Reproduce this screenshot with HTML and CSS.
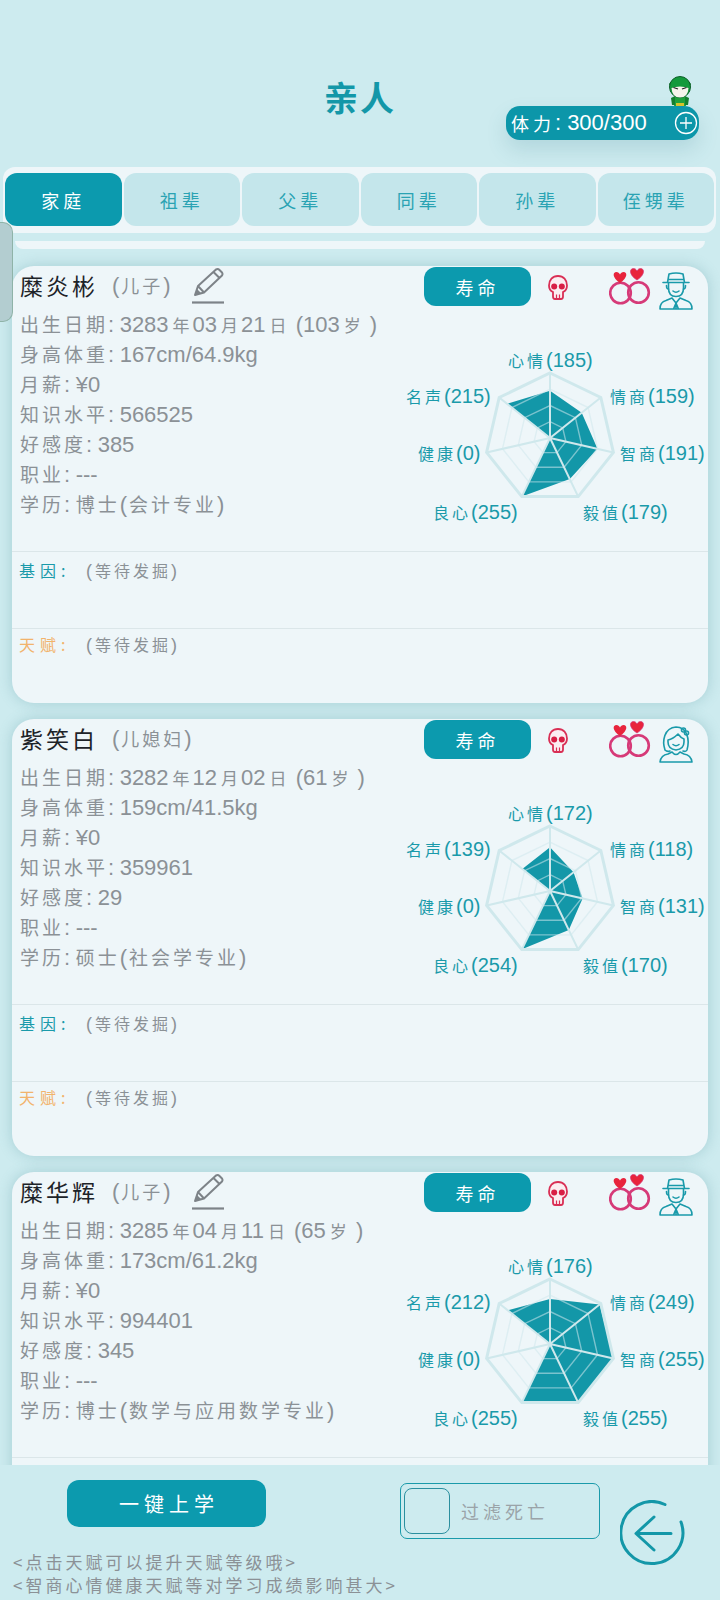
FILE: index.html
```html
<!DOCTYPE html>
<html lang="zh-CN">
<head>
    <meta charset="UTF-8">
    <meta name="viewport" content="width=device-width, initial-scale=1.0">
    <title>亲人</title>
    <link rel="stylesheet" href="styles.css">
</head>
<body>
    <!-- shared icons -->
    <svg class="defs" width="0" height="0">
        <defs>
            <symbol id="pencil" viewBox="0 0 32 36">
                <path d="M3 27 L6 18 L24 1.5 Q26 0.5 27.5 2 L30 4.5 Q31 6 30 7.5 L12 24.5 Z M6 18 L12 24.5 M21.5 4 L27.5 10" fill="none" stroke="#7d8388" stroke-width="2" stroke-linejoin="round"/>
                <path d="M3 27 L5 21 L9 25 Z" fill="#7d8388"/>
                <path d="M0 34.5 H32" stroke="#7d8388" stroke-width="2.2"/>
            </symbol>
            <symbol id="skull" viewBox="0 0 20 25">
                <path d="M10 1 C4.5 1 1 5 1 10.5 C1 14 2.5 16 5 17 V21.5 Q5 24 7 24 H13 Q15 24 15 21.5 V17 C17.5 16 19 14 19 10.5 C19 5 15.5 1 10 1 Z" fill="#fbeef1" stroke="#d92f55" stroke-width="1.8"/>
                <circle cx="6.2" cy="11.5" r="3" fill="#d81f45"/>
                <circle cx="13.8" cy="11.5" r="3" fill="#d81f45"/>
                <path d="M8.5 19.5 V24 M11.5 19.5 V24" stroke="#d92f55" stroke-width="1.2"/>
            </symbol>
            <symbol id="rings" viewBox="0 0 42 37">
                <circle cx="11.5" cy="25" r="10.3" fill="none" stroke="#d63a78" stroke-width="2.6"/>
                <circle cx="29.5" cy="24.5" r="10.3" fill="none" stroke="#d63a78" stroke-width="2.6"/>
                <path d="M11 15 C3 9.5 3.5 4 7.5 4 C9 4 10.3 5 11 6.5 C11.7 5 13 4 14.5 4 C18.5 4 19 9.5 11 15 Z" fill="#e8243c"/>
                <path d="M28 12 C19.5 6.5 20.5 0.5 24.5 0.5 C26 0.5 27.3 1.5 28 3 C28.7 1.5 30 0.5 31.5 0.5 C35.5 0.5 36.5 6.5 28 12 Z" fill="#e8243c" stroke="#d63a78" stroke-width="0.8"/>
            </symbol>
            <symbol id="man" viewBox="0 0 34 38">
                <g fill="none" stroke="#1a9aaa" stroke-width="1.6" stroke-linejoin="round" stroke-linecap="round">
                    <path d="M4 10.5 H30 M8.5 10.5 L10 2 Q17 0 24 2 L25.5 10.5 M9 7.5 H25"/>
                    <path d="M9.5 11 V16 Q9.5 24.5 17 24.5 Q24.5 24.5 24.5 16 V11"/>
                    <path d="M7.5 13.5 Q7.5 17 9.5 17 M26.5 13.5 Q26.5 17 24.5 17"/>
                    <path d="M14 19 Q17 21.5 20 19"/>
                    <path d="M1 37 Q1 30 7 28.5 L13 26 L17 31 L21 26 L27 28.5 Q33 30 33 37 Z M17 31 V37 M14.5 37 L17 31 L19.5 37"/>
                </g>
            </symbol>
            <symbol id="woman" viewBox="0 0 34 38">
                <g fill="none" stroke="#1a9aaa" stroke-width="1.6" stroke-linejoin="round" stroke-linecap="round">
                    <path d="M6 25 C3 16 5 3 17 2 C28 2 31 14 28 25 Q27 27 24 26 M6 25 Q8 27 11 26"/>
                    <path d="M9 15 Q14 14 19 9 Q22 13 25 14 V17 Q25 24 17 25 Q9 24 9 17 Z"/>
                    <path d="M14 19.5 Q17 22 20 19.5"/>
                    <circle cx="24.5" cy="5" r="2"/>
                    <circle cx="27.5" cy="8" r="2"/>
                    <path d="M1 37 Q2 30 9 29 L13 27 Q17 32 21 27 L25 29 Q32 30 33 37 Z"/>
                </g>
            </symbol>
        </defs>
    </svg>

    <header class="top">
        <h1 class="title">亲人</h1>
        <div class="stamina-wrap">
            <svg class="hero" viewBox="0 0 26 30" width="26" height="30">
                <path d="M8 20 H18 L19 30 H7 Z" fill="#1fa23c"/>
                <rect x="9" y="27" width="8" height="3" fill="#d9c52a"/>
                <path d="M4 22 L8 20 V29 H5 Z M22 22 L18 20 V29 H21 Z" fill="#14802e"/>
                <path d="M2 8 L4.5 5 V14 Z M24 8 L21.5 5 V14 Z" fill="#14702a"/>
                <ellipse cx="13" cy="11" rx="10.5" ry="10.5" fill="#149a3c" stroke="#0b5f27" stroke-width="1"/>
                <path d="M4.5 12 Q13 9 21.5 12 Q21 21.5 13 21.5 Q5 21.5 4.5 12 Z" fill="#f6f4ec"/>
                <path d="M6.5 11.5 L11 13 M19.5 11.5 L15 13" stroke="#222" stroke-width="1.3"/>
            </svg>
            <div class="stamina">
                <span class="zh">体力</span><span class="colon">:</span>300/300
                <svg class="plus" viewBox="0 0 24 24" width="24" height="24">
                    <circle cx="12" cy="12" r="10.5" fill="none" stroke="#fff" stroke-width="1.3"/>
                    <path d="M12 6 V18 M6 12 H18" stroke="#fff" stroke-width="1.3"/>
                </svg>
            </div>
        </div>
    </header>

    <nav class="tabs">
        <div class="tab active">家庭</div>
        <div class="tab">祖辈</div>
        <div class="tab">父辈</div>
        <div class="tab">同辈</div>
        <div class="tab">孙辈</div>
        <div class="tab">侄甥辈</div>
    </nav>

    <div class="handle"></div>

    <main class="list">
        <div class="card-prev"></div>

        <section class="card">
            <div class="head">
                <span class="name">糜炎彬</span>
                <span class="relation">(<span class="zh">儿子</span>)</span>
                <svg class="pencil"><use href="#pencil"/></svg>
                <div class="actions">
                    <button class="life">寿命</button>
                    <svg class="skull"><use href="#skull"/></svg>
                    <svg class="rings"><use href="#rings"/></svg>
                    <svg class="person"><use href="#man"/></svg>
                </div>
            </div>
            <div class="body">
                <div class="info">
                    <div class="row"><span class="zh">出生日期</span><span class="colon">:</span>3283<span class="unit">年</span>03<span class="unit">月</span>21<span class="unit">日</span> (103<span class="unit">岁</span> )</div>
                    <div class="row"><span class="zh">身高体重</span><span class="colon">:</span>167cm/64.9kg</div>
                    <div class="row"><span class="zh">月薪</span><span class="colon">:</span>¥0</div>
                    <div class="row"><span class="zh">知识水平</span><span class="colon">:</span>566525</div>
                    <div class="row"><span class="zh">好感度</span><span class="colon">:</span>385</div>
                    <div class="row"><span class="zh">职业</span><span class="colon">:</span>---</div>
                    <div class="row"><span class="zh">学历</span><span class="colon">:</span><span class="zh">博士</span>(<span class="zh major">会计专业</span>)</div>
                </div>
                <div class="radar">
                    <svg class="radar-svg" viewBox="-75 -75 150 150">
                        <polygon class="data" points="0,-47.2 31.7,-25.3 47.5,10.8 19.8,41.1 -28.2,58.6 0,0 -42.8,-34.2"/>
                        <polygon class="ring" points="0,-48.8 38.1,-30.4 47.5,10.8 21.2,43.9 -21.2,43.9 -47.5,10.8 -38.1,-30.4"/>
                        <polygon class="ring" points="0,-32.5 25.4,-20.3 31.7,7.2 14.1,29.3 -14.1,29.3 -31.7,7.2 -25.4,-20.3"/>
                        <polygon class="ring" points="0,-16.3 12.7,-10.1 15.9,3.6 7,14.6 -7,14.6 -15.9,3.6 -12.7,-10.1"/>
                        <path class="spokes" d="M0 0 L0 -65 M0 0 L50.8 -40.5 M0 0 L63.4 14.5 M0 0 L28.2 58.6 M0 0 L-28.2 58.6 M0 0 L-63.4 14.5 M0 0 L-50.8 -40.5"/>
                        <polygon class="outer" points="0,-65 50.8,-40.5 63.4,14.5 28.2,58.6 -28.2,58.6 -63.4,14.5 -50.8,-40.5"/>
                    </svg>
                    <span class="stat s-mood"><span class="zh">心情</span>(185)</span>
                    <span class="stat s-eq"><span class="zh">情商</span>(159)</span>
                    <span class="stat s-iq"><span class="zh">智商</span>(191)</span>
                    <span class="stat s-will"><span class="zh">毅值</span>(179)</span>
                    <span class="stat s-good"><span class="zh">良心</span>(255)</span>
                    <span class="stat s-health"><span class="zh">健康</span>(0)</span>
                    <span class="stat s-fame"><span class="zh">名声</span>(215)</span>
                </div>
            </div>
            <div class="trait gene"><span class="trait-label">基因<span class="colon">:</span></span><span class="pending">(<span class="zh">等待发掘</span>)</span></div>
            <div class="trait talent"><span class="trait-label">天赋<span class="colon">:</span></span><span class="pending">(<span class="zh">等待发掘</span>)</span></div>
        </section>

        <section class="card">
            <div class="head">
                <span class="name">紫笑白</span>
                <span class="relation">(<span class="zh">儿媳妇</span>)</span>
                <div class="actions">
                    <button class="life">寿命</button>
                    <svg class="skull"><use href="#skull"/></svg>
                    <svg class="rings"><use href="#rings"/></svg>
                    <svg class="person"><use href="#woman"/></svg>
                </div>
            </div>
            <div class="body">
                <div class="info">
                    <div class="row"><span class="zh">出生日期</span><span class="colon">:</span>3282<span class="unit">年</span>12<span class="unit">月</span>02<span class="unit">日</span> (61<span class="unit">岁</span> )</div>
                    <div class="row"><span class="zh">身高体重</span><span class="colon">:</span>159cm/41.5kg</div>
                    <div class="row"><span class="zh">月薪</span><span class="colon">:</span>¥0</div>
                    <div class="row"><span class="zh">知识水平</span><span class="colon">:</span>359961</div>
                    <div class="row"><span class="zh">好感度</span><span class="colon">:</span>29</div>
                    <div class="row"><span class="zh">职业</span><span class="colon">:</span>---</div>
                    <div class="row"><span class="zh">学历</span><span class="colon">:</span><span class="zh">硕士</span>(<span class="zh major">社会学专业</span>)</div>
                </div>
                <div class="radar">
                    <svg class="radar-svg" viewBox="-75 -75 150 150">
                        <polygon class="data" points="0,-43.8 23.5,-18.8 32.6,7.4 18.8,39 -28.1,58.3 0,0 -27.7,-22.1"/>
                        <polygon class="ring" points="0,-48.8 38.1,-30.4 47.5,10.8 21.2,43.9 -21.2,43.9 -47.5,10.8 -38.1,-30.4"/>
                        <polygon class="ring" points="0,-32.5 25.4,-20.3 31.7,7.2 14.1,29.3 -14.1,29.3 -31.7,7.2 -25.4,-20.3"/>
                        <polygon class="ring" points="0,-16.3 12.7,-10.1 15.9,3.6 7,14.6 -7,14.6 -15.9,3.6 -12.7,-10.1"/>
                        <path class="spokes" d="M0 0 L0 -65 M0 0 L50.8 -40.5 M0 0 L63.4 14.5 M0 0 L28.2 58.6 M0 0 L-28.2 58.6 M0 0 L-63.4 14.5 M0 0 L-50.8 -40.5"/>
                        <polygon class="outer" points="0,-65 50.8,-40.5 63.4,14.5 28.2,58.6 -28.2,58.6 -63.4,14.5 -50.8,-40.5"/>
                    </svg>
                    <span class="stat s-mood"><span class="zh">心情</span>(172)</span>
                    <span class="stat s-eq"><span class="zh">情商</span>(118)</span>
                    <span class="stat s-iq"><span class="zh">智商</span>(131)</span>
                    <span class="stat s-will"><span class="zh">毅值</span>(170)</span>
                    <span class="stat s-good"><span class="zh">良心</span>(254)</span>
                    <span class="stat s-health"><span class="zh">健康</span>(0)</span>
                    <span class="stat s-fame"><span class="zh">名声</span>(139)</span>
                </div>
            </div>
            <div class="trait gene"><span class="trait-label">基因<span class="colon">:</span></span><span class="pending">(<span class="zh">等待发掘</span>)</span></div>
            <div class="trait talent"><span class="trait-label">天赋<span class="colon">:</span></span><span class="pending">(<span class="zh">等待发掘</span>)</span></div>
        </section>

        <section class="card">
            <div class="head">
                <span class="name">糜华辉</span>
                <span class="relation">(<span class="zh">儿子</span>)</span>
                <svg class="pencil"><use href="#pencil"/></svg>
                <div class="actions">
                    <button class="life">寿命</button>
                    <svg class="skull"><use href="#skull"/></svg>
                    <svg class="rings"><use href="#rings"/></svg>
                    <svg class="person"><use href="#man"/></svg>
                </div>
            </div>
            <div class="body">
                <div class="info">
                    <div class="row"><span class="zh">出生日期</span><span class="colon">:</span>3285<span class="unit">年</span>04<span class="unit">月</span>11<span class="unit">日</span> (65<span class="unit">岁</span> )</div>
                    <div class="row"><span class="zh">身高体重</span><span class="colon">:</span>173cm/61.2kg</div>
                    <div class="row"><span class="zh">月薪</span><span class="colon">:</span>¥0</div>
                    <div class="row"><span class="zh">知识水平</span><span class="colon">:</span>994401</div>
                    <div class="row"><span class="zh">好感度</span><span class="colon">:</span>345</div>
                    <div class="row"><span class="zh">职业</span><span class="colon">:</span>---</div>
                    <div class="row"><span class="zh">学历</span><span class="colon">:</span><span class="zh">博士</span>(<span class="zh major">数学与应用数学专业</span>)</div>
                </div>
                <div class="radar">
                    <svg class="radar-svg" viewBox="-75 -75 150 150">
                        <polygon class="data" points="0,-44.9 49.6,-39.6 63.4,14.5 28.2,58.6 -28.2,58.6 0,0 -42.2,-33.7"/>
                        <polygon class="ring" points="0,-48.8 38.1,-30.4 47.5,10.8 21.2,43.9 -21.2,43.9 -47.5,10.8 -38.1,-30.4"/>
                        <polygon class="ring" points="0,-32.5 25.4,-20.3 31.7,7.2 14.1,29.3 -14.1,29.3 -31.7,7.2 -25.4,-20.3"/>
                        <polygon class="ring" points="0,-16.3 12.7,-10.1 15.9,3.6 7,14.6 -7,14.6 -15.9,3.6 -12.7,-10.1"/>
                        <path class="spokes" d="M0 0 L0 -65 M0 0 L50.8 -40.5 M0 0 L63.4 14.5 M0 0 L28.2 58.6 M0 0 L-28.2 58.6 M0 0 L-63.4 14.5 M0 0 L-50.8 -40.5"/>
                        <polygon class="outer" points="0,-65 50.8,-40.5 63.4,14.5 28.2,58.6 -28.2,58.6 -63.4,14.5 -50.8,-40.5"/>
                    </svg>
                    <span class="stat s-mood"><span class="zh">心情</span>(176)</span>
                    <span class="stat s-eq"><span class="zh">情商</span>(249)</span>
                    <span class="stat s-iq"><span class="zh">智商</span>(255)</span>
                    <span class="stat s-will"><span class="zh">毅值</span>(255)</span>
                    <span class="stat s-good"><span class="zh">良心</span>(255)</span>
                    <span class="stat s-health"><span class="zh">健康</span>(0)</span>
                    <span class="stat s-fame"><span class="zh">名声</span>(212)</span>
                </div>
            </div>
            <div class="trait gene"></div>
        </section>
    </main>

    <footer class="bottom">
        <div class="bottom-left">
            <button class="study">一键上学</button>
            <p class="hint">&lt;点击天赋可以提升天赋等级哦&gt;</p>
            <p class="hint">&lt;智商心情健康天赋等对学习成绩影响甚大&gt;</p>
        </div>
        <label class="filter">
            <span class="check"></span>
            <span class="filter-text">过滤死亡</span>
        </label>
        <svg class="back" viewBox="0 0 66 66" width="66" height="66">
            <path d="M45 4.5 A31 31 0 1 0 61 22" fill="none" stroke="#1397a8" stroke-width="3" stroke-linecap="round"/>
            <path d="M51 33.5 H17 M34 17 L16 33.5 L34 50" fill="none" stroke="#1397a8" stroke-width="3" stroke-linecap="round" stroke-linejoin="round"/>
        </svg>
    </footer>
</body>
</html>
```

FILE: styles.css
```css
* {
    box-sizing: border-box;
}
body {
    margin: 0;
    width: 720px;
    height: 1600px;
    overflow: hidden;
    position: relative;
    background: #cdebef;
    font-family: "Liberation Sans", "Noto Sans CJK SC", sans-serif;
    color: #8b9196;
}
.defs {
    position: absolute;
}
.zh {
    font-family: "Noto Sans CJK SC", sans-serif;
    font-size: 19px;
    letter-spacing: 3px;
    font-weight: 400;
}
.colon {
    margin-right: 5.5px;
}

/* header */
.top {
    height: 167px;
    display: grid;
    grid-template-columns: 1fr auto 1fr;
}
.title {
    grid-column: 2;
    margin: 74px 0 0;
    font-family: "Noto Sans CJK SC", sans-serif;
    font-size: 34px;
    line-height: 46px;
    letter-spacing: 2px;
    font-weight: 700;
    color: #1397a8;
    height: 46px;
}
.stamina-wrap {
    grid-column: 3;
    justify-self: end;
    margin: 76px 21px 0 0;
    width: 193px;
    display: flex;
    flex-direction: column;
}
.hero {
    align-self: flex-end;
    margin: 0 6px 0 0;
}
.stamina {
    height: 34px;
    padding-left: 5px;
    display: flex;
    align-items: center;
    background: #0c96a9;
    border-radius: 14px 15px 15px 14px;
    color: #fff;
    font-size: 22px;
    box-shadow: 0 10px 20px rgba(60, 130, 145, 0.18);
}
.stamina .zh {
    letter-spacing: 4px;
    font-size: 18px;
}
.stamina .colon {
    margin-right: 6px;
}
.plus {
    margin-left: auto;
    margin-right: 1px;
}

/* tabs */
.tabs {
    margin: 0 4px 0 3px;
    height: 66px;
    padding: 6px 2px 7px;
    display: flex;
    gap: 2px;
    background: #eef6f9;
    border-radius: 12px;
}
.tab {
    flex: 1;
    display: flex;
    align-items: center;
    justify-content: center;
    background: #c4e6eb;
    border-radius: 12px;
    color: #2aa3b3;
    font-family: "Noto Sans CJK SC", sans-serif;
    font-size: 18px;
    letter-spacing: 4px;
}
.tab.active {
    background: #0c9aae;
    color: #fff;
}

.handle {
    position: absolute;
    left: 0;
    top: 222px;
    width: 13px;
    height: 100px;
    background: #b3cdd0;
    border: 1px solid #8fb3a8;
    border-left: none;
    border-radius: 0 10px 10px 0;
    z-index: 2;
}

/* list */
.list {
    height: 1232px;
    padding: 8px 12px 0;
    overflow: hidden;
}
.card-prev {
    margin: 0 3px 17px;
    height: 8px;
    background: #eef6f9;
    border-radius: 0 0 12px 12px;
}
.card {
    height: 437px;
    margin-bottom: 16px;
    background: #eef6f9;
    border-radius: 22px;
    box-shadow: 0 0 14px rgba(80, 145, 155, 0.32);
}
.head {
    height: 44px;
    padding: 1px 15px 0 8px;
    display: flex;
    align-items: flex-start;
}
.name {
    font-family: "Noto Sans CJK SC", sans-serif;
    font-size: 23px;
    line-height: 36px;
    letter-spacing: 3px;
    color: #1d2328;
    margin-right: 14px;
}
.relation {
    font-size: 22px;
    line-height: 36px;
    color: #8b9196;
}
.relation .zh {
    margin: 0 0 0 2px;
    font-size: 18px;
}
.pencil {
    width: 32px;
    height: 36px;
    margin: 1px 0 0 21px;
}
.actions {
    margin-left: auto;
    display: flex;
    align-items: flex-start;
    height: 43px;
}
.life {
    width: 107px;
    height: 39px;
    padding: 0;
    border: none;
    background: #0c9aae;
    border-radius: 12px;
    color: #fff;
    font-family: "Noto Sans CJK SC", sans-serif;
    font-size: 18px;
    letter-spacing: 4px;
}
.skull {
    width: 20px;
    height: 25px;
    margin: 8px 0 0 17px;
}
.rings {
    width: 42px;
    height: 37px;
    margin: 1px 0 0 41px;
}
.person {
    width: 34px;
    height: 38px;
    margin: 5px 0 0 8px;
}
.body {
    height: 241px;
    display: flex;
    justify-content: space-between;
}
.info {
    padding-left: 8px;
    margin-top: -1px;
}
.row {
    height: 30px;
    line-height: 30px;
    font-size: 22px;
    white-space: nowrap;
}
.unit {
    font-family: "Noto Sans CJK SC", sans-serif;
    font-size: 17px;
    margin: 0 3px 0 4px;
}
.row .major {
    margin-left: 2px;
}

/* radar chart, labels sit round the canvas */
.radar {
    position: relative;
    width: 310px;
    height: 241px;
    flex: none;
}
.radar-svg {
    position: absolute;
    left: 77px;
    top: 53px;
    width: 150px;
    height: 150px;
}
.data {
    fill: #1397a8;
}
.ring {
    fill: none;
    stroke: #cfe8ec;
    stroke-width: 1.4;
    opacity: 0.55;
}
.spokes {
    fill: none;
    stroke: #cfe8ec;
    stroke-width: 2;
}
.outer {
    fill: none;
    stroke: #cfe8ec;
    stroke-width: 3;
}
.stat {
    position: absolute;
    height: 24px;
    line-height: 24px;
    font-size: 20px;
    color: #1a9aaa;
    white-space: nowrap;
}
.stat .zh {
    font-size: 16px;
    letter-spacing: 3px;
}
.s-mood { left: 110px; top: 38px; }
.s-eq { left: 212px; top: 74px; }
.s-iq { left: 222px; top: 131px; }
.s-will { left: 185px; top: 190px; }
.s-good { left: 35px; top: 190px; }
.s-health { left: 20px; top: 131px; }
.s-fame { left: 8px; top: 74px; }

/* gene and talent */
.trait {
    border-top: 1px solid #dbe6e9;
    padding: 6px 0 0 7px;
    display: flex;
    line-height: 24px;
    font-size: 18px;
}
.gene {
    height: 77px;
}
.talent {
    height: 75px;
    padding-top: 3px;
}
.trait-label {
    width: 67px;
    font-family: "Noto Sans CJK SC", sans-serif;
    font-size: 16px;
    letter-spacing: 5px;
}
.gene .trait-label {
    color: #1a9aaa;
}
.talent .trait-label {
    color: #f2b36c;
}
.pending {
    color: #8b9196;
}
.pending .zh {
    font-size: 16px;
    letter-spacing: 3px;
    margin-left: 3px;
}

/* bottom bar */
.bottom {
    height: 135px;
    display: flex;
    align-items: flex-start;
}
.bottom-left {
    width: 400px;
    padding: 15px 0 0 13px;
}
.study {
    display: block;
    width: 199px;
    height: 47px;
    margin: 0 0 23px 54px;
    padding: 0 0 0 5px;
    border: none;
    background: #0c9aae;
    border-radius: 12px;
    color: #fff;
    font-family: "Noto Sans CJK SC", sans-serif;
    font-size: 20px;
    letter-spacing: 5px;
}
.hint {
    margin: 0;
    height: 23px;
    line-height: 23px;
    font-family: "Noto Sans CJK SC", sans-serif;
    font-size: 17px;
    letter-spacing: 3px;
    color: #8b9196;
    white-space: nowrap;
}
.filter {
    width: 200px;
    height: 56px;
    margin-top: 18px;
    padding: 3px;
    display: flex;
    align-items: center;
    border: 1.5px solid #1a9aaa;
    border-radius: 7px;
}
.check {
    width: 46px;
    height: 46px;
    border: 1.5px solid #2b8f9f;
    border-radius: 8px;
}
.filter-text {
    margin-left: 11px;
    font-family: "Noto Sans CJK SC", sans-serif;
    font-size: 18px;
    letter-spacing: 4px;
    color: #9aa3a8;
}
.back {
    margin: 35px 0 0 20px;
}
```
